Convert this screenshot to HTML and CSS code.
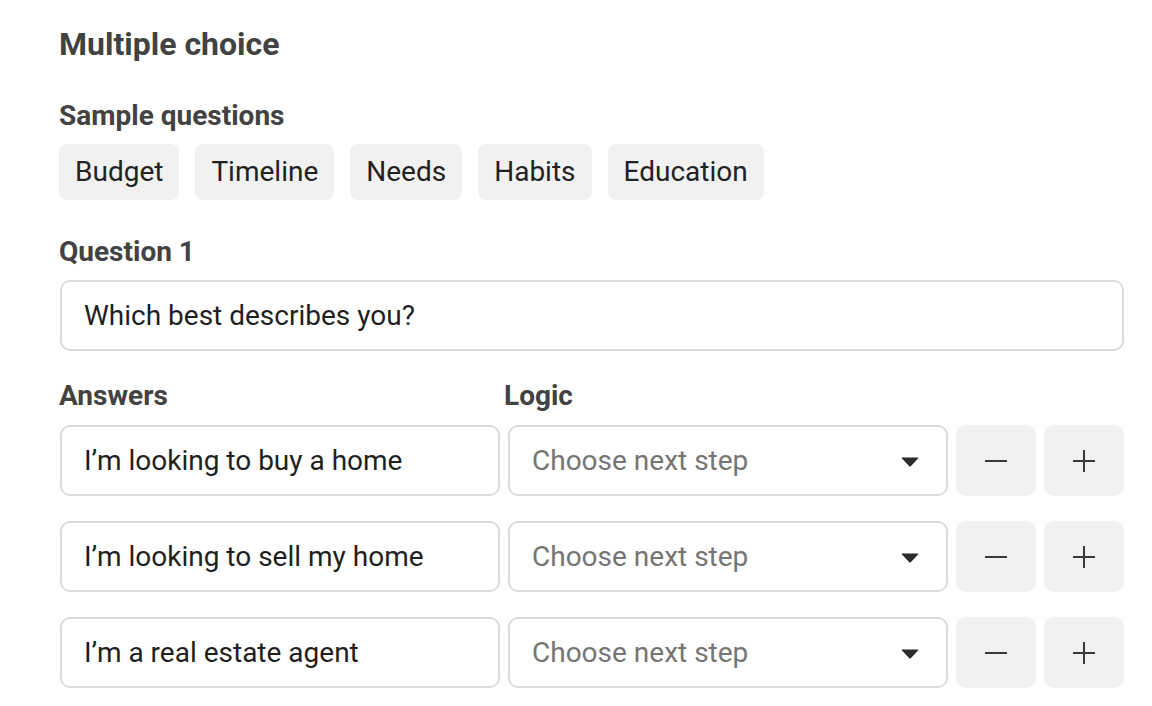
FILE: index.html
```html
<!DOCTYPE html>
<html>
<head>
<meta charset="utf-8">
<link rel="stylesheet" href="styles.css">
</head>
<body>
<main class="panel">
  <h1 class="title">Multiple choice</h1>
  <h2 class="label label-sample">Sample questions</h2>
  <div class="chips">
    <span class="chip">Budget</span>
    <span class="chip">Timeline</span>
    <span class="chip">Needs</span>
    <span class="chip">Habits</span>
    <span class="chip">Education</span>
  </div>
  <h2 class="label label-question">Question 1</h2>
  <div class="field field-wide">Which best describes you?</div>
  <div class="grid">
    <div class="label label-col">Answers</div>
    <div class="label label-col label-logic">Logic</div>
    <div></div>
    <div></div>

    <div class="field">I’m looking to buy a home</div>
    <div class="field select"><span class="placeholder">Choose next step</span><svg class="caret" width="20" height="12" viewBox="0 0 20 12"><path d="M2.5 1.5 H17.5 Q19 1.5 18 2.6 L11 10 Q10 11 9 10 L2 2.6 Q1 1.5 2.5 1.5 Z" fill="#2b2b2b"/></svg></div>
    <button class="btn"><svg width="24" height="24" viewBox="0 0 24 24"><path d="M1 12 H23" stroke="#3a3a3a" stroke-width="2"/></svg></button>
    <button class="btn"><svg width="24" height="24" viewBox="0 0 24 24"><path d="M1 12 H23 M12 1 V23" stroke="#3a3a3a" stroke-width="2"/></svg></button>

    <div class="field">I’m looking to sell my home</div>
    <div class="field select"><span class="placeholder">Choose next step</span><svg class="caret" width="20" height="12" viewBox="0 0 20 12"><path d="M2.5 1.5 H17.5 Q19 1.5 18 2.6 L11 10 Q10 11 9 10 L2 2.6 Q1 1.5 2.5 1.5 Z" fill="#2b2b2b"/></svg></div>
    <button class="btn"><svg width="24" height="24" viewBox="0 0 24 24"><path d="M1 12 H23" stroke="#3a3a3a" stroke-width="2"/></svg></button>
    <button class="btn"><svg width="24" height="24" viewBox="0 0 24 24"><path d="M1 12 H23 M12 1 V23" stroke="#3a3a3a" stroke-width="2"/></svg></button>

    <div class="field">I’m a real estate agent</div>
    <div class="field select"><span class="placeholder">Choose next step</span><svg class="caret" width="20" height="12" viewBox="0 0 20 12"><path d="M2.5 1.5 H17.5 Q19 1.5 18 2.6 L11 10 Q10 11 9 10 L2 2.6 Q1 1.5 2.5 1.5 Z" fill="#2b2b2b"/></svg></div>
    <button class="btn"><svg width="24" height="24" viewBox="0 0 24 24"><path d="M1 12 H23" stroke="#3a3a3a" stroke-width="2"/></svg></button>
    <button class="btn"><svg width="24" height="24" viewBox="0 0 24 24"><path d="M1 12 H23 M12 1 V23" stroke="#3a3a3a" stroke-width="2"/></svg></button>
  </div>
</main>
</body>
</html>
```

FILE: styles.css
```css
* { box-sizing: border-box; }
html, body { margin: 0; padding: 0; background: #fff; }
body {
  font-family: Roboto, "Liberation Sans", Arial, sans-serif;
  color: #1f1f1f;
}
.panel {
  padding: 25px 28px 0 59px;
  display: flex;
  flex-direction: column;
}
.title {
  margin: 0;
  font-size: 32px;
  line-height: 38px;
  font-weight: 700;
  color: #424242;
}
.label {
  margin: 0;
  font-size: 28px;
  line-height: 34px;
  font-weight: 700;
  color: #424242;
}
.label-sample { margin-top: 36px; }
.chips {
  display: flex;
  gap: 16px;
  margin-top: 11px;
}
.chip {
  height: 56px;
  line-height: 56px;
  padding: 0 16px;
  background: #f1f1f1;
  border-radius: 8px;
  font-size: 28px;
  color: #222;
}
.label-question { margin-top: 35px; }
.field {
  height: 71px;
  border: 2px solid #dcdcdc;
  border-radius: 10px;
  padding: 0 22px;
  display: flex;
  align-items: center;
  font-size: 28px;
  color: #1f1f1f;
  background: #fff;
  white-space: nowrap;
}
.field-wide { margin-top: 11px; margin-left: 1px; }
.grid {
  margin-top: 28px;
  display: grid;
  grid-template-columns: 440px 440px 80px 80px;
  justify-content: space-between;
  row-gap: 25px;
  margin-left: 1px;
}
.label-col { margin-bottom: -13px; margin-left: -1px; }
.label-logic { margin-left: -4px; }
.select { justify-content: space-between; padding-right: 26px; }
.placeholder { color: #757575; }
.caret { display: block; margin-top: 2px; }
.btn {
  height: 71px;
  border: 0;
  border-radius: 10px;
  background: #f1f1f1;
  display: flex;
  align-items: center;
  justify-content: center;
  padding: 0;
}
.btn svg { display: block; }
```
